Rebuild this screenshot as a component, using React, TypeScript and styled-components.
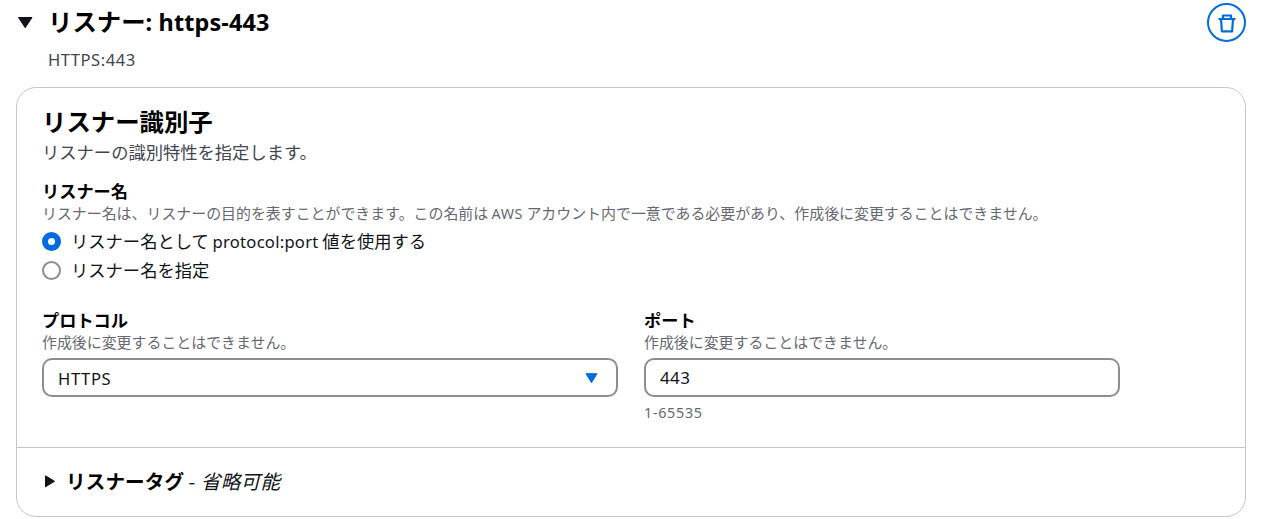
import React, { useState } from 'react';
import styled, { createGlobalStyle } from 'styled-components';

const GlobalStyle = createGlobalStyle`
  * {
    box-sizing: border-box;
  }

  body {
    margin: 0;
    background: #fff;
    color: #0f141a;
    font-family: 'Noto Sans CJK JP', sans-serif;
    font-size: 17.3px;
    line-height: 24px;
    overflow: hidden;
  }
`;

const Page = styled.div`
  height: 519px;
  padding: 0 16px;
`;

const Header = styled.header`
  display: flex;
  justify-content: space-between;
  height: 87px;
  padding-top: 3px;
`;

const HeaderText = styled.div`
  display: grid;
  grid-template-columns: 32px auto;
  grid-template-rows: 37px 38px;
  align-items: center;
  height: 75px;
`;

const Title = styled.h2`
  margin: 0;
  color: #000;
  font-size: 24.4px;
  font-weight: 700;
  line-height: 32px;
  white-space: nowrap;
`;

const HeaderTitle = styled(Title)`
  padding-bottom: 2px;
`;

const Subtitle = styled.div`
  grid-column: 2;
  color: #424650;
`;

const Latin = styled.span<{ $spacing?: number }>`
  font-family: 'Noto Sans', sans-serif;
  font-size: 0.96em;
  line-height: 1;
  letter-spacing: ${({ $spacing = 0 }) => $spacing}px;
`;

const IconButton = styled.button`
  display: flex;
  align-items: center;
  justify-content: center;
  width: 39px;
  height: 39px;
  padding: 0;
  border: 2px solid #006ce0;
  border-radius: 50%;
  background: #fff;
  color: #006ce0;
  cursor: pointer;
`;

const Card = styled.section`
  height: 430px;
  border: 1px solid #c6c6cd;
  border-radius: 20px;
`;

const CardBody = styled.div`
  height: 359px;
  padding: 17px 25px 0;
`;

const SectionTitle = styled(Title)`
  height: 35px;
`;

const Description = styled.p`
  margin: 0;
  height: 39px;
  color: #424650;
`;

const Label = styled.div`
  height: 23px;
  color: #000;
  font-size: 17.2px;
  font-weight: 700;
  line-height: 23px;
`;

const Hint = styled.div`
  height: 21px;
  color: #656871;
  font-size: 14.93px;
  line-height: 21px;
  white-space: nowrap;
`;

const RadioGroup = styled.div`
  display: flex;
  flex-direction: column;
  gap: 5px;
  padding-top: 6px;
`;

const RadioRow = styled.label`
  display: flex;
  align-items: center;
  gap: 10px;
  height: 24px;
  cursor: pointer;
`;

const Radio = styled.input`
  appearance: none;
  width: 19px;
  height: 19px;
  margin: 0;
  border: 2px solid #8c8c94;
  border-radius: 50%;
  background: #fff;

  &:checked {
    border: 6px solid #006ce0;
  }
`;

const Fields = styled.div`
  display: grid;
  grid-template-columns: 576px 476px;
  gap: 26px;
  padding-top: 26px;
`;

const Control = styled.div`
  display: flex;
  align-items: center;
  justify-content: space-between;
  height: 39px;
  margin: 6px 0 4px;
  padding: 0 18px 0 14px;
  border: 2px solid #8c8c94;
  border-radius: 10px;
`;

const SelectValue = styled.div`
  padding-top: 1px;
`;

const TextInput = styled.input`
  width: 100%;
  padding: 0;
  border: none;
  outline: none;
  color: #0f141a;
  background: transparent;
  font-family: 'Noto Sans', sans-serif;
  font-size: 17px;
  letter-spacing: 0.4px;
`;

const CardFooter = styled.div`
  display: flex;
  align-items: center;
  height: 68px;
  padding: 0 0 1px 27px;
  border-top: 1px solid #c6c6cd;
  font-size: 19.6px;
`;

const FooterTitle = styled.span`
  padding: 0 0 1px 11px;
  white-space: pre;

  b {
    color: #000;
    letter-spacing: 0.1px;
  }

  i {
    margin-left: 1px;
    letter-spacing: 0.3px;
  }
`;

const Caret = ({ right = false }: { right?: boolean }) =>
  right ? (
    <svg width="11" height="14" viewBox="0 0 11 14">
      <path d="M1.5 1.8 10.5 7.3 1.5 12.8Z" fill="#0f141a" stroke="#0f141a" strokeLinejoin="round" />
    </svg>
  ) : (
    <svg width="18" height="14" viewBox="0 0 18 14">
      <path d="M2.5 2.5H16L9.2 12.7Z" fill="#0f141a" stroke="#0f141a" strokeLinejoin="round" />
    </svg>
  );

const SelectArrow = () => (
  <svg width="13" height="12" viewBox="0 0 13 12">
    <path d="M1 1.7H12L6.5 10.7Z" fill="#006ce0" stroke="#006ce0" strokeLinejoin="round" />
  </svg>
);

const TrashIcon = () => (
  <svg width="20" height="20" viewBox="0 0 20 20" fill="none" stroke="currentColor" strokeWidth="2.2" strokeLinejoin="round">
    <path d="M1.5 6H18.5M6 6V2.5H14V6M4 6 4.9 18.4H15.1L16 6" />
  </svg>
);

function App() {
  const [nameMode, setNameMode] = useState('auto');
  const [port, setPort] = useState('443');

  return (
    <Page>
      <GlobalStyle />
      <Header>
        <HeaderText>
          <Caret />
          <HeaderTitle>リスナー<Latin $spacing={0.15}>: https-443</Latin></HeaderTitle>
          <Subtitle><Latin $spacing={0.5}>HTTPS:443</Latin></Subtitle>
        </HeaderText>
        <IconButton aria-label="削除">
          <TrashIcon />
        </IconButton>
      </Header>

      <Card>
        <CardBody>
          <SectionTitle>リスナー識別子</SectionTitle>
          <Description>リスナーの識別特性を指定します。</Description>

          <Label>リスナー名</Label>
          <Hint>
            リスナー名は、リスナーの目的を表すことができます。この名前は <Latin $spacing={0.6}>AWS</Latin> アカウント内で一意である必要があり、作成後に変更することはできません。
          </Hint>
          <RadioGroup>
            <RadioRow>
              <Radio type="radio" name="mode" checked={nameMode === 'auto'} onChange={() => setNameMode('auto')} />
              <span>リスナー名として <Latin $spacing={0.25}>protocol:port</Latin> 値を使用する</span>
            </RadioRow>
            <RadioRow>
              <Radio type="radio" name="mode" checked={nameMode === 'custom'} onChange={() => setNameMode('custom')} />
              <span>リスナー名を指定</span>
            </RadioRow>
          </RadioGroup>

          <Fields>
            <div>
              <Label>プロトコル</Label>
              <Hint>作成後に変更することはできません。</Hint>
              <Control>
                <SelectValue><Latin $spacing={0.6}>HTTPS</Latin></SelectValue>
                <SelectArrow />
              </Control>
            </div>
            <div>
              <Label>ポート</Label>
              <Hint>作成後に変更することはできません。</Hint>
              <Control>
                <TextInput value={port} onChange={(e) => setPort(e.target.value)} />
              </Control>
              <Hint><Latin $spacing={0.7}>1-65535</Latin></Hint>
            </div>
          </Fields>
        </CardBody>

        <CardFooter>
          <Caret right />
          <FooterTitle>
            <b>リスナータグ</b> - <i>省略可能</i>
          </FooterTitle>
        </CardFooter>
      </Card>
    </Page>
  );
}

export default App;
